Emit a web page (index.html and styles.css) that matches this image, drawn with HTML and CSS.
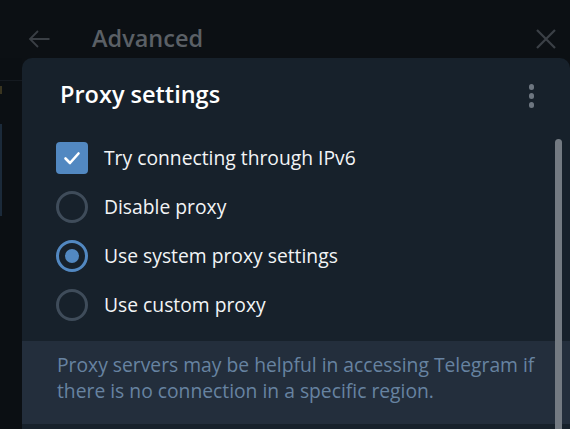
FILE: index.html
```html
<!DOCTYPE html>
<html lang="en">
<head>
<meta charset="utf-8">
<title>Proxy settings</title>
<link rel="stylesheet" href="styles.css">
</head>
<body>
<div class="app">
  <header class="topbar">
    <svg class="back" width="22" height="20" viewBox="0 0 22 20"><path d="M21.5 10H2M10 2L2 10l8 8" fill="none" stroke="currentColor" stroke-width="1.8"/></svg>
    <span class="page-title">Advanced</span>
    <svg class="close" width="20" height="20" viewBox="0 0 20 20"><path d="M1 1l18 18M19 1L1 19" fill="none" stroke="currentColor" stroke-width="2.2"/></svg>
  </header>
  <div class="layer">
    <aside class="behind">
      <div class="line"></div>
      <div class="mark"></div>
      <div class="blue"></div>
    </aside>
    <section class="modal">
      <div class="modal-head">
        <h1>Proxy settings</h1>
        <div class="kebab"><i></i><i></i><i></i></div>
      </div>
      <ul class="options">
        <li><span class="check"><svg width="18" height="14" viewBox="0 0 18 14"><path d="M2.5 7.5l4.5 4.5L15.5 2.5" fill="none" stroke="#fff" stroke-width="2.6" stroke-linecap="round" stroke-linejoin="round"/></svg></span>Try connecting through IPv6</li>
        <li><span class="radio"></span>Disable proxy</li>
        <li><span class="radio on"></span>Use system proxy settings</li>
        <li><span class="radio"></span>Use custom proxy</li>
      </ul>
      <p class="about">Proxy servers may be helpful in accessing Telegram if there is no connection in a specific region.</p>
      <div class="scrollbar"></div>
    </section>
  </div>
</div>
</body>
</html>
```
FILE: styles.css
```css
* { box-sizing: border-box; margin: 0; padding: 0; }
html, body { width: 570px; height: 429px; overflow: hidden; }
body { background: #0c1014; font-family: "Open Sans", "Noto Sans", sans-serif; }
.app { display: flex; flex-direction: column; height: 429px; }
.topbar { height: 58px; display: flex; align-items: flex-start; padding: 29px 14px 0 28px; color: #3a3f45; }
.back { margin-top: 0; }
.page-title { margin-left: 42px; margin-top: -7px; font-size: 23.5px; font-weight: 600; color: #5b6066; }
.close { margin-left: auto; margin-top: 0; color: #3b4046; }
.layer { flex: 1; display: flex; }
.behind { width: 22px; position: relative; background: #0b0f13; }
.behind .line { position: absolute; left: 0; top: 22px; width: 22px; height: 1px; background: #151a20; }
.behind .mark { position: absolute; left: 0; top: 28px; width: 2px; height: 8px; background: #3a3520; }
.behind .blue { position: absolute; left: 0; top: 66px; width: 2px; height: 92px; background: #1b2a3a; }
.modal { flex: 1; position: relative; background: #17212b; border-radius: 10px 10px 0 0; display: flex; flex-direction: column; }
.modal-head { display: flex; align-items: center; height: 74px; padding: 0 0 0 38px; }
.modal-head h1 { font-size: 23.5px; font-weight: 600; color: #ffffff; margin-top: -2px; }
.kebab { margin-left: auto; margin-right: 36px; display: flex; flex-direction: column; gap: 3.5px; margin-top: 2px; }
.kebab i { display: block; width: 5.5px; height: 5.5px; border-radius: 50%; background: #6d7680; }
.options { list-style: none; padding: 1px 0 0 34px; height: 209px; }
.options li { display: flex; align-items: center; height: 49px; font-size: 19.3px; color: #f2f4f6; }
.check { width: 32px; height: 32px; border-radius: 4px; background: #5288c1; display: flex; align-items: center; justify-content: center; margin-right: 16px; }
.radio { width: 32px; height: 32px; border-radius: 50%; border: 3px solid #3f4c5a; margin-right: 16px; display: flex; align-items: center; justify-content: center; }
.radio.on { border-color: #5288c1; }
.radio.on::after { content: ""; width: 14px; height: 14px; border-radius: 50%; background: #5288c1; }
.about { background: #232e3c; height: 83px; padding: 11px 24px 0 35px; font-size: 19.3px; line-height: 26px; color: #6783a1; }
.scrollbar { position: absolute; left: 533px; top: 81px; width: 7px; height: 300px; border-radius: 4px 4px 0 0; background: #737a82; }
```
